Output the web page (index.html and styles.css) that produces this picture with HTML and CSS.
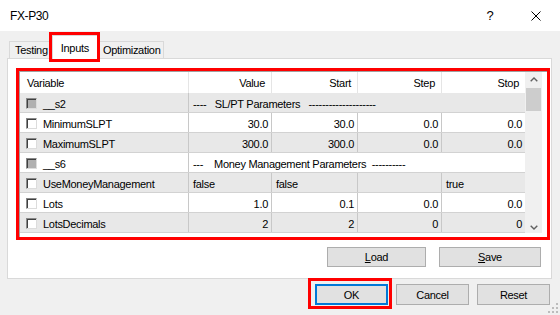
FILE: index.html
```html
<!DOCTYPE html>
<html>
<head>
<meta charset="utf-8">
<link rel="stylesheet" href="styles.css">
</head>
<body>
<div class="window">
  <div class="titlebar">
    <span class="title">FX-P30</span>
    <span class="tb-btn">?</span>
    <span class="tb-btn close"><svg width="10" height="10" viewBox="0 0 10 10"><path d="M0.5 0.5L9.5 9.5M9.5 0.5L0.5 9.5" stroke="#000" stroke-width="1" fill="none"/></svg></span>
  </div>
  <div class="tabs">
    <div class="tab">Testing</div>
    <div class="tab active">Inputs</div>
    <div class="tab last">Optimization</div>
  </div>
  <div class="panel">
    <div class="hl-grid">
      <div class="grid">
        <div class="cols">
          <div class="row head">
            <div class="cell var">Variable</div>
            <div class="cell">Value</div>
            <div class="cell">Start</div>
            <div class="cell">Step</div>
            <div class="cell">Stop</div>
          </div>
          <div class="row alt">
            <div class="cell var"><span class="cb sect"></span>__s2</div>
            <div class="cell span4">----   SL/PT Parameters   --------------------</div>
          </div>
          <div class="row">
            <div class="cell var"><span class="cb"></span>MinimumSLPT</div>
            <div class="cell num">30.0</div>
            <div class="cell num">30.0</div>
            <div class="cell num">0.0</div>
            <div class="cell num">0.0</div>
          </div>
          <div class="row alt">
            <div class="cell var"><span class="cb"></span>MaximumSLPT</div>
            <div class="cell num">300.0</div>
            <div class="cell num">300.0</div>
            <div class="cell num">0.0</div>
            <div class="cell num">0.0</div>
          </div>
          <div class="row">
            <div class="cell var"><span class="cb sect"></span>__s6</div>
            <div class="cell span4">---    Money Management Parameters  ----------</div>
          </div>
          <div class="row alt">
            <div class="cell var"><span class="cb"></span>UseMoneyManagement</div>
            <div class="cell txt">false</div>
            <div class="cell txt">false</div>
            <div class="cell txt"></div>
            <div class="cell txt">true</div>
          </div>
          <div class="row">
            <div class="cell var"><span class="cb"></span>Lots</div>
            <div class="cell num">1.0</div>
            <div class="cell num">0.1</div>
            <div class="cell num">0.0</div>
            <div class="cell num">0.0</div>
          </div>
          <div class="row alt">
            <div class="cell var"><span class="cb"></span>LotsDecimals</div>
            <div class="cell num">2</div>
            <div class="cell num">2</div>
            <div class="cell num">0</div>
            <div class="cell num">0</div>
          </div>
        </div>
        <div class="vscroll">
          <div class="sb-arrow up"><svg width="8" height="5" viewBox="0 0 8 5"><polyline points="0.7,4.3 4,1 7.3,4.3" fill="none" stroke="#606060" stroke-width="1.4"/></svg></div>
          <div class="sb-thumb"></div>
          <div class="sb-track"></div>
          <div class="sb-arrow down"><svg width="8" height="5" viewBox="0 0 8 5"><polyline points="0.7,0.7 4,4 7.3,0.7" fill="none" stroke="#606060" stroke-width="1.4"/></svg></div>
        </div>
      </div>
    </div>
    <div class="panel-buttons">
      <div class="btn load"><u>L</u>oad</div>
      <div class="btn save"><u>S</u>ave</div>
    </div>
  </div>
  <div class="dialog-buttons">
    <div class="btn dlg ok">OK</div>
    <div class="btn dlg">Cancel</div>
    <div class="btn dlg">Reset</div>
  </div>
  <svg class="grip" width="12" height="12" viewBox="0 0 12 12">
    <rect x="9" y="1" width="2" height="2" fill="#bcbcbc"/>
    <rect x="5" y="5" width="2" height="2" fill="#bcbcbc"/>
    <rect x="9" y="5" width="2" height="2" fill="#bcbcbc"/>
    <rect x="1" y="9" width="2" height="2" fill="#bcbcbc"/>
    <rect x="5" y="9" width="2" height="2" fill="#bcbcbc"/>
    <rect x="9" y="9" width="2" height="2" fill="#bcbcbc"/>
  </svg>
</div>
</body>
</html>
```
FILE: styles.css
```css
* { box-sizing: border-box; }
html, body { margin: 0; padding: 0; }
body {
  width: 560px;
  height: 315px;
  overflow: hidden;
  background: #f0f0f0;
  font-family: "Liberation Sans", Arial, sans-serif;
  font-size: 11px;
  letter-spacing: -0.3px;
  color: #000;
}
.window { position: relative; width: 560px; height: 315px; }

.titlebar {
  height: 31px;
  background: #fff;
  display: flex;
  align-items: center;
}
.title {
  flex: 1;
  padding-left: 10px;
  font-size: 12px;
  letter-spacing: -0.4px;
}
.tb-btn {
  width: 46px;
  height: 31px;
  display: flex;
  align-items: center;
  justify-content: center;
  font-size: 13px;
  letter-spacing: 0;
}
.tb-btn.close { margin-right: 1px; }

.tabs {
  display: flex;
  align-items: flex-end;
  height: 23px;
  margin-top: 4px;
  padding-left: 9px;
}
.tab {
  height: 17px;
  border: 1px solid #d9d9d9;
  border-bottom: none;
  background: #f0f0f0;
  display: flex;
  align-items: center;
  padding: 0 5px;
}
.tab.active {
  position: relative;
  z-index: 1;
  height: 24px;
  margin-bottom: -1px;
  margin-left: -2px;
  padding: 0 8px;
  background: #fff;
}
.tab.active::after {
  content: "";
  position: absolute;
  top: -4px;
  left: -4px;
  right: -3px;
  bottom: -3px;
  border: 3px solid #ff0000;
}
.tab.last { margin-left: -2px; padding: 0 3px 0 6px; }

.panel {
  margin-left: 7px;
  width: 545px;
  height: 221px;
  border: 1px solid #d9d9d9;
  background: #fff;
  padding: 9px 10px 11px 8px;
  display: flex;
  flex-direction: column;
}
.hl-grid {
  width: 534px;
  height: 172px;
  border: 3px solid #ff0000;
}
.grid {
  height: 100%;
  border-left: 1px solid #a0a0a0;
  border-top: 1px solid #a0a0a0;
  display: flex;
  align-items: flex-start;
}
.cols { width: 505px; }
.row {
  display: grid;
  grid-template-columns: 169px 83px 86px 84px 83px;
  height: 20px;
  border-bottom: 1px solid #d2d2d2;
  background: #fff;
}
.row.alt { background: #e8e8e8; }
.row.head { height: 21px; border-bottom: none; background: #fff; }
.cell {
  display: flex;
  align-items: center;
  padding: 2px 3px 0 3px;
  border-right: 1px solid #c8c8c8;
  white-space: pre;
  overflow: hidden;
}
.cell:last-child { border-right: none; }
.head .cell {
  padding: 0 6px 0 3px;
  justify-content: flex-end;
  border-right-color: #e5e5e5;
}
.head .cell.var { justify-content: flex-start; padding-left: 7px; }
.cell.var { padding-left: 6px; }
.cell.num { justify-content: flex-end; }
.cell.txt { padding-left: 4px; }
.cell.span4 { grid-column: span 4; padding-left: 4px; border-right: none; }
.cb {
  width: 11px;
  height: 11px;
  margin: -1px 6px 0 0;
  flex-shrink: 0;
  background: #fff;
  border: 1px solid;
  border-color: #8a8a8a #dcdcdc #dcdcdc #8a8a8a;
  box-shadow: inset 1px 1px 0 #404040;
}
.cb.sect { background: #b0b0b0; }

.vscroll {
  width: 17px;
  height: 161px;
  background: #f0f0f0;
  display: flex;
  flex-direction: column;
}
.sb-arrow {
  height: 16px;
  display: flex;
  justify-content: center;
  align-items: flex-start;
}
.sb-arrow.up { padding-top: 5px; }
.sb-arrow.down { padding-top: 8px; }
.sb-arrow svg { display: block; }
.sb-thumb { height: 23px; margin: 0 1px; background: #cdcdcd; }
.sb-track { flex: 1; }

.panel-buttons {
  display: flex;
  justify-content: flex-end;
  gap: 13px;
  margin-top: 7px;
}
.btn {
  height: 20px;
  border: 1px solid #adadad;
  background: #e1e1e1;
  display: flex;
  align-items: center;
  justify-content: center;
}
.btn.load { width: 99px; }
.btn.save { width: 102px; }

.dialog-buttons {
  display: flex;
  justify-content: flex-end;
  gap: 8px;
  margin-top: 5px;
  padding-right: 10px;
}
.btn.dlg { width: 73px; height: 21px; }
.btn.ok {
  position: relative;
  border: 2px solid #0078d7;
}
.btn.ok::after {
  content: "";
  position: absolute;
  top: -8px;
  left: -9px;
  right: -6px;
  bottom: -6px;
  border: 3px solid #ff0000;
}
.grip { position: absolute; right: 1px; bottom: 1px; }
```
